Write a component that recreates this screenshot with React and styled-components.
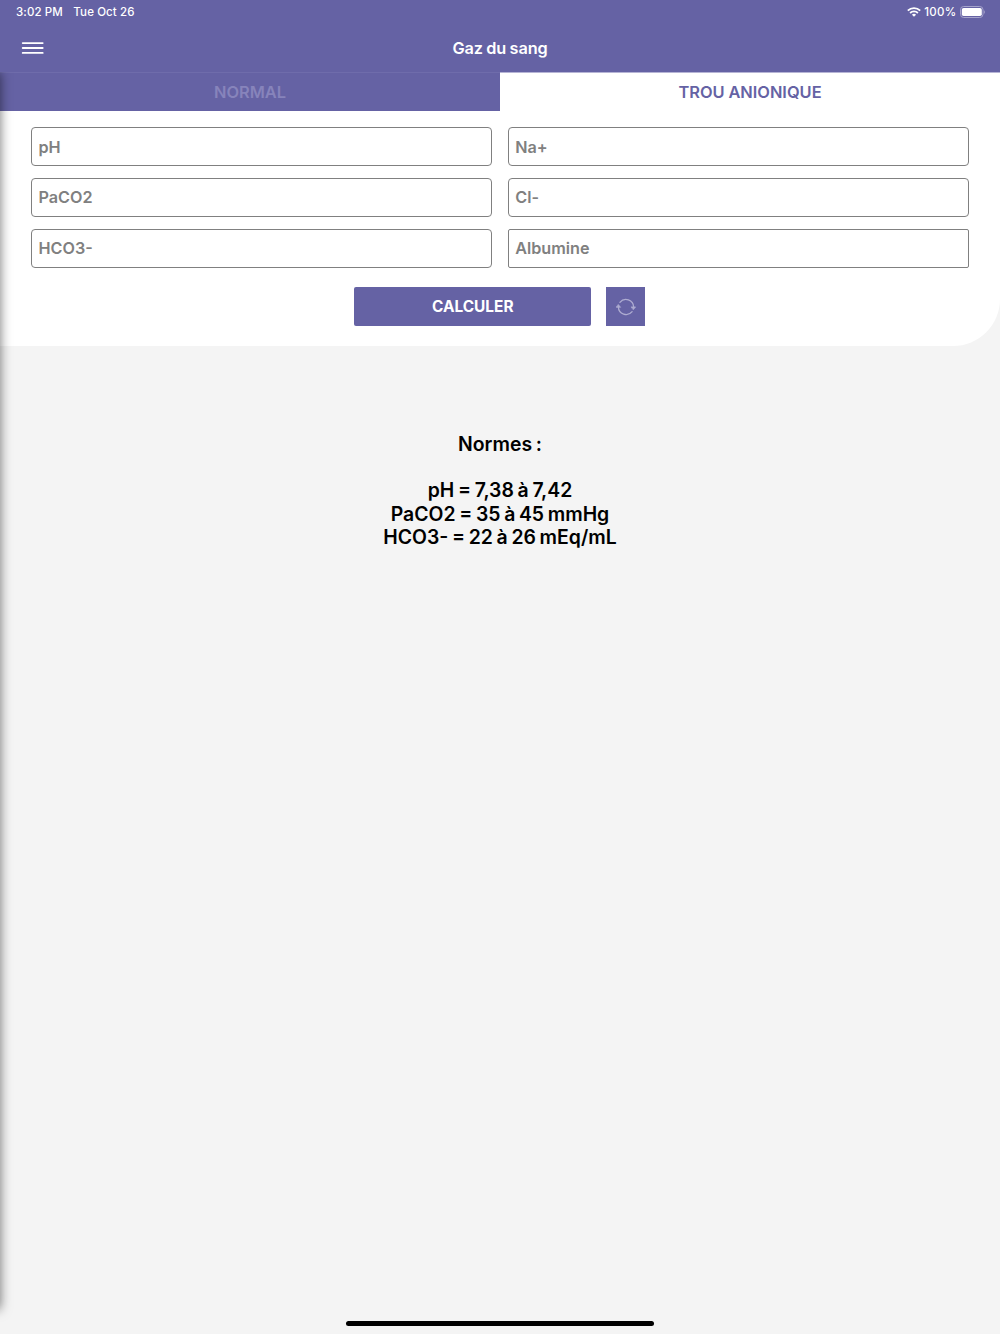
import React from 'react';
import { useState } from 'react';
import styled, { createGlobalStyle } from 'styled-components';

const purple = '#6562a4';

const GlobalStyle = createGlobalStyle`
    * {
        box-sizing: border-box;
    }

    body {
        margin: 0;
        background-color: #f4f4f4;
        font-family: Inter, "Liberation Sans", sans-serif;
    }
    `
const Screen = styled.div`
    position: relative;
    display: flex;
    flex-direction: column;
    width: 100%;
    height: 1334px;
    overflow: hidden;
    background-color: #f4f4f4;
    `
const StatusBar = styled.div`
    display: flex;
    justify-content: space-between;
    align-items: center;
    height: 24px;
    padding: 0 14.5px 0 16px;
    background-color: ${purple};
    color: white;
    font-size: 11.5px;
    font-weight: 500;
    `
const StatusGroup = styled.div`
    display: flex;
    align-items: center;
    gap: ${(props) => props.$gap};
    letter-spacing: ${(props) => props.$spacing};
    `
const Header = styled.header`
    display: grid;
    grid-template-columns: 100px 1fr 100px;
    align-items: center;
    height: 48px;
    background-color: ${purple};
    `
const MenuButton = styled.button`
    width: 22px;
    height: 14px;
    margin-left: 21px;
    padding: 0;
    border: none;
    background: none;
    cursor: pointer;
    `
const Title = styled.h1`
    margin: 0;
    color: white;
    font-size: 16.3px;
    font-weight: 600;
    letter-spacing: -0.1px;
    word-spacing: -0.6px;
    text-align: center;
    `
const Tabs = styled.div`
    display: flex;
    height: 39.4px;
    `
const Tab = styled.button`
    flex: 1;
    padding: 0;
    border: none;
    border-top: 1px solid ${(props) => (props.$active ? '#b6b4d5' : '#6f6cab')};
    background-color: ${(props) => (props.$active ? 'white' : purple)};
    color: ${(props) => (props.$active ? purple : '#8784bb')};
    font-family: inherit;
    font-size: 16.4px;
    font-weight: 600;
    word-spacing: -0.3px;
    cursor: pointer;
    `
const Panel = styled.section`
    display: flex;
    flex-direction: column;
    gap: 19.4px;
    height: 234.6px;
    padding: 15.8px 31.5px 0 31px;
    border-radius: 0 0 47px 0;
    background-color: white;
    `
const Fields = styled.div`
    display: grid;
    grid-template-columns: 1fr 1fr;
    column-gap: 16px;
    row-gap: 11.8px;
    `
const Field = styled.input`
    width: 100%;
    height: 39px;
    padding: 0 6.5px;
    border: 1px solid #808080;
    border-radius: ${(props) => props.$radius || '4px'};
    outline: none;
    background-color: white;
    color: black;
    font-family: inherit;
    font-size: 16.2px;
    font-weight: 600;

    &::placeholder {
        color: #808080;
        opacity: 1;
    }
    `
const Actions = styled.div`
    display: flex;
    justify-content: center;
    gap: 15px;
    `
const Button = styled.button`
    display: flex;
    justify-content: center;
    align-items: center;
    width: ${(props) => props.$width};
    height: 39px;
    padding: 0;
    border: none;
    border-radius: ${(props) => props.$radius};
    background-color: ${purple};
    color: white;
    font-family: inherit;
    font-size: 15.4px;
    font-weight: 700;
    cursor: pointer;
    `
const Norms = styled.div`
    margin-top: 87px;
    color: black;
    font-size: 19.4px;
    font-weight: 600;
    line-height: 23.2px;
    word-spacing: -1.2px;
    text-align: center;
    `
const NormLine = styled.p`
    min-height: 23.2px;
    margin: 0;
    `
const DrawerShadow = styled.div`
    position: absolute;
    top: 72px;
    left: -20px;
    width: 20px;
    height: 1237px;
    box-shadow: 0 0 12px rgba(0, 0, 0, 0.55);
    clip-path: inset(0 -20px -20px 0);
    pointer-events: none;
    `
const HomeIndicator = styled.div`
    position: absolute;
    bottom: 8px;
    left: 346px;
    width: 308px;
    height: 5px;
    border-radius: 3px;
    background-color: black;
    `

const MenuIcon = () => (
    <svg width="23" height="14" viewBox="0 0 23 14" stroke="white" strokeWidth="1.8" strokeLinecap="round" display="block">
        <path d="M1.7 2.1h20M1.7 7h20M1.7 11.9h20" />
    </svg>
)

const WifiIcon = () => (
    <svg width="14" height="10" viewBox="0 0 14 10" fill="none" stroke="white" strokeWidth="1.8">
        <path d="M0.8 3.7a8.8 8.8 0 0 1 12.4 0" />
        <path d="M3.1 6a5.6 5.6 0 0 1 7.8 0" />
        <path d="M7 9.8L4.9 7.7a3 3 0 0 1 4.2 0z" fill="white" stroke="none" />
    </svg>
)

const BatteryIcon = () => (
    <svg width="26" height="12" viewBox="0 0 26 12">
        <rect x="0.5" y="0.5" width="22.5" height="11" rx="3.2" fill="none" stroke="#a5a3cb" />
        <rect x="1.8" y="1.9" width="20" height="8.2" rx="1.8" fill="white" />
        <path d="M24.2 4.2c1.1.4 1.1 3.2 0 3.6z" fill="#a5a3cb" />
    </svg>
)

const ResetIcon = () => (
    <svg width="20" height="18" viewBox="0 0 20 18" fill="none" stroke="#aeacd1" strokeWidth="1.3" strokeLinecap="round">
        <path d="M3.9 4.3A7.7 7.7 0 0 1 17.6 9" />
        <path d="M16.1 13.7A7.7 7.7 0 0 1 2.4 9" />
        <path d="M15.4 8.9h4.2l-2.1 2.6zM0.4 9.3h4.2L2.5 6.7z" fill="#aeacd1" strokeWidth="0.7" />
    </svg>
)

const fields = [
    { name: 'pH' },
    { name: 'Na+' },
    { name: 'PaCO2' },
    { name: 'Cl-' },
    { name: 'HCO3-' },
    { name: 'Albumine', radius: '2px' },
];

const App = () => {

    const [tab, setTab] = useState('trou');
    const [values, setValues] = useState({});

    const Change = (name, value) => {
        setValues({ ...values, [name]: value });
    }

    return (
        <Screen>
            <GlobalStyle />
            <StatusBar>
                <StatusGroup $gap="10.5px" $spacing="0.1px">
                    <span>3:02 PM</span>
                    <span>Tue Oct 26</span>
                </StatusGroup>
                <StatusGroup $gap="3px" $spacing="0.3px">
                    <WifiIcon />
                    <span>100%</span>
                    <BatteryIcon />
                </StatusGroup>
            </StatusBar>
            <Header>
                <MenuButton aria-label="Menu">
                    <MenuIcon />
                </MenuButton>
                <Title>Gaz du sang</Title>
            </Header>
            <Tabs>
                <Tab $active={tab === 'normal'} onClick={() => setTab('normal')}>NORMAL</Tab>
                <Tab $active={tab === 'trou'} onClick={() => setTab('trou')}>TROU ANIONIQUE</Tab>
            </Tabs>
            <Panel>
                <Fields>
                    {fields.map((field) => (
                        <Field
                            key={field.name}
                            placeholder={field.name}
                            $radius={field.radius}
                            value={values[field.name] || ''}
                            onChange={(e) => Change(field.name, e.target.value)}
                        />
                    ))}
                </Fields>
                <Actions>
                    <Button $width="237px" $radius="2px">CALCULER</Button>
                    <Button $width="39px" $radius="0" aria-label="Reset" onClick={() => setValues({})}>
                        <ResetIcon />
                    </Button>
                </Actions>
            </Panel>
            <Norms>
                <NormLine>Normes :</NormLine>
                <NormLine />
                <NormLine>pH = 7,38 à 7,42</NormLine>
                <NormLine>PaCO2 = 35 à 45 mmHg</NormLine>
                <NormLine>HCO3- = 22 à 26 mEq/mL</NormLine>
            </Norms>
            <DrawerShadow />
            <HomeIndicator />
        </Screen>
    );
};

export default App;
